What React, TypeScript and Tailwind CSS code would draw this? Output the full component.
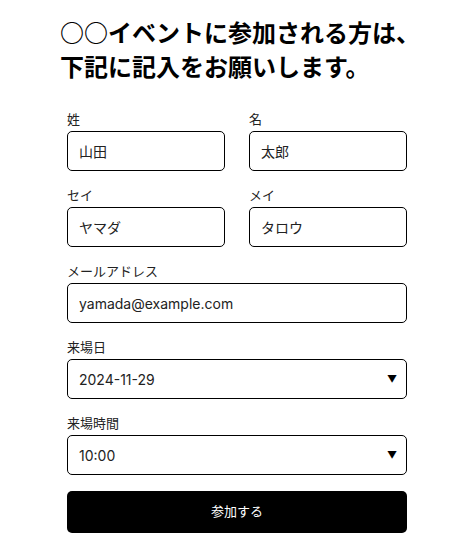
import React, { useState } from 'react';

const FONT = { fontFamily: 'Inter, "Noto Sans CJK JP", sans-serif' };
const HEADING_FONT = { fontFamily: '"Noto Sans CJK JP", sans-serif' };

const Field: React.FC<{ label: string; children: React.ReactNode }> = ({ label, children }) => (
  <div className="flex flex-col">
    <label className="text-[13px] leading-4 text-[#222] mb-1">{label}</label>
    {children}
  </div>
);

const inputCls =
  'w-full h-10 px-[11px] border border-black rounded-[5px] text-[14px] text-[#222] bg-white outline-none';

const App: React.FC = () => {
  const [form, setForm] = useState({
    sei: '山田',
    mei: '太郎',
    seiKana: 'ヤマダ',
    meiKana: 'タロウ',
    email: 'yamada@example.com',
    date: '2024-11-29',
    time: '10:00',
  });

  const set = (k: keyof typeof form) => (e: React.ChangeEvent<HTMLInputElement | HTMLSelectElement>) =>
    setForm({ ...form, [k]: e.target.value });

  return (
    <div className="min-h-screen bg-white pl-[60px] pt-[15px]" style={FONT}>
      <h1 className="w-[362px] text-[24px] leading-[34px] font-bold text-black" style={HEADING_FONT}>
        ○○イベントに参加される方は、下記に記入をお願いします。
      </h1>

      <form className="ml-[7px] mt-[28px] w-[340px] flex flex-col gap-4" onSubmit={(e) => e.preventDefault()}>
        <div className="grid grid-cols-2 gap-6">
          <Field label="姓">
            <input className={inputCls} value={form.sei} onChange={set('sei')} />
          </Field>
          <Field label="名">
            <input className={inputCls} value={form.mei} onChange={set('mei')} />
          </Field>
        </div>
        <div className="grid grid-cols-2 gap-6">
          <Field label="セイ">
            <input className={inputCls} value={form.seiKana} onChange={set('seiKana')} />
          </Field>
          <Field label="メイ">
            <input className={inputCls} value={form.meiKana} onChange={set('meiKana')} />
          </Field>
        </div>
        <Field label="メールアドレス">
          <input className={inputCls} value={form.email} onChange={set('email')} />
        </Field>
        <Field label="来場日">
          <div className="relative">
            <select className={`${inputCls} appearance-none`} value={form.date} onChange={set('date')}>
              <option>2024-11-29</option>
              <option>2024-11-30</option>
            </select>
            <span className="pointer-events-none absolute right-[10px] top-1/2 -translate-y-1/2 text-[10px] text-black">▼</span>
          </div>
        </Field>
        <Field label="来場時間">
          <div className="relative">
            <select className={`${inputCls} appearance-none`} value={form.time} onChange={set('time')}>
              <option>10:00</option>
              <option>11:00</option>
              <option>12:00</option>
            </select>
            <span className="pointer-events-none absolute right-[10px] top-1/2 -translate-y-1/2 text-[10px] text-black">▼</span>
          </div>
        </Field>
        <button type="submit" className="h-[42px] bg-black text-white text-[13px] rounded-[5px]">
          参加する
        </button>
      </form>
    </div>
  );
};

export default App;
